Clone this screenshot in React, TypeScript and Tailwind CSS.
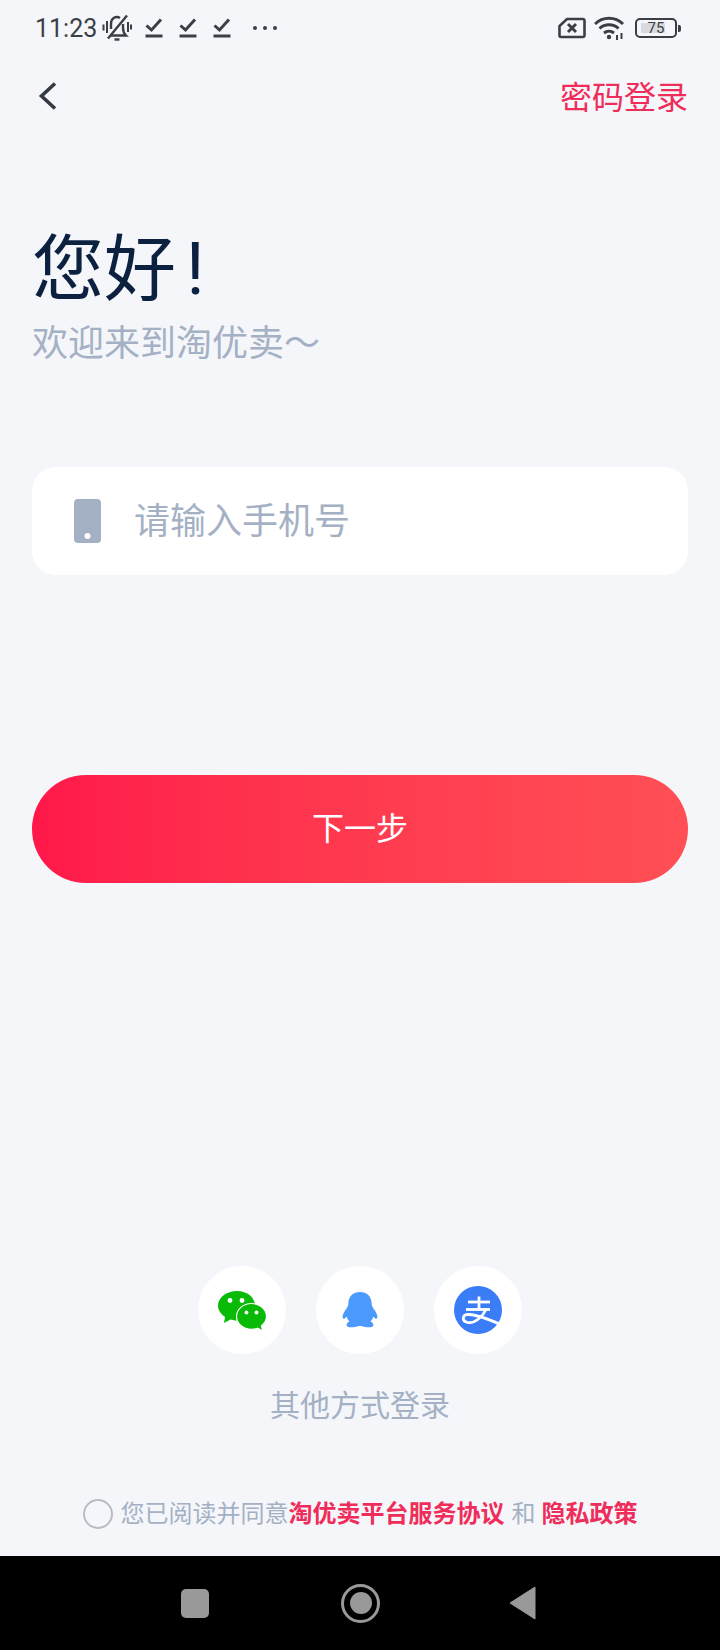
const cjk = "font-['Roboto','Noto_Sans_CJK_SC',sans-serif]";

function CheckMark() {
  return (
    <svg width="18" height="22" viewBox="0 0 18 22" fill="none" stroke="#3b3f45">
      <path d="M1.500 8.500 L6.500 13 L16 2.500" strokeWidth="3" />
      <path d="M0.500 19 H17.500" strokeWidth="3" />
    </svg>
  );
}

function StatusBar() {
  return (
    <div className="h-[56px] flex items-center pl-[35px] pr-[39px] text-[#3b3f45]">
      <span className="text-[25px] leading-none font-['Roboto',sans-serif]">11:23</span>
      {/* muted bell */}
      <svg width="30" height="28" viewBox="0 0 30 28" fill="none" stroke="#3b3f45" strokeWidth="2.400" className="ml-[5px]">
        <path d="M9 21.500 H24 C22 19.500 21 17.500 21 14 V10" />
        <path d="M18 4 C14 1.500 9 4 9 10 V15" />
        <path d="M6 24.500 L25 1.500" />
        <path d="M12.500 25.500 H17.500" />
        <path d="M1.500 10.500 V16.500 M5 7 V19 M26 8 V18 M29 10.500 V15.500" strokeWidth="2" />
      </svg>
      <div className="flex items-center gap-[16px] ml-[13px]">
        <CheckMark />
        <CheckMark />
        <CheckMark />
      </div>
      <div className="flex gap-[6px] ml-[22px]">
        <span className="w-[4px] h-[4px] rounded-full bg-[#3b3f45]" />
        <span className="w-[4px] h-[4px] rounded-full bg-[#3b3f45]" />
        <span className="w-[4px] h-[4px] rounded-full bg-[#3b3f45]" />
      </div>
      <div className="ml-auto flex items-center">
        {/* sim card */}
        <svg width="28" height="22" viewBox="0 0 28 22" fill="none" stroke="#3b3f45">
          <path d="M9 2 H25 A1.500 1.500 0 0 1 26.500 3.500 V18.500 A1.500 1.500 0 0 1 25 20 H3 A1.500 1.500 0 0 1 1.500 18.500 V9 Z" strokeWidth="2.600" />
          <path d="M10 7 L18 15 M18 7 L10 15" strokeWidth="3" />
        </svg>
        {/* wifi */}
        <svg width="31" height="24" viewBox="0 0 31 24" fill="none" stroke="#3b3f45" strokeWidth="3" className="ml-[8px]">
          <path d="M1 8 A20 20 0 0 1 29 8" />
          <path d="M5.500 12.500 A14 14 0 0 1 24.500 12.500" />
          <path d="M10 17 A8 8 0 0 1 20 17" />
          <circle cx="15" cy="21" r="2.200" fill="#3b3f45" stroke="none" />
          <path d="M23 19 V24 M27.500 17 V23" strokeWidth="2" />
        </svg>
        {/* battery */}
        <div className="ml-[10px] flex items-center">
          <div className="relative w-[42px] h-[20px] rounded-[5px] border-2 border-[#3b3f45] flex items-center justify-center">
            <span className="absolute left-[4px] top-[3px] bottom-[3px] w-[24px] bg-[#d8dade] rounded-[1px]" />
            <span className="relative text-[15px] leading-none font-['Roboto',sans-serif]">75</span>
          </div>
          <span className="ml-[1px] w-[3px] h-[7px] rounded-r-[2px] bg-[#3b3f45]" />
        </div>
      </div>
    </div>
  );
}

function WeChatIcon() {
  return (
    <svg width="49" height="42" viewBox="0 0 49 42" className="mt-[4px]">
      <path d="M19 0 C29.500 0 37 6.800 37 14.500 C37 23 29 29.500 19 29.500 C16.500 29.500 14.800 29 12.500 28.500 L6 32 L7 26 C3 23 0 19.500 0 14.500 C0 6.800 8.500 0 19 0 Z" fill="#09bb07" />
      <path d="M33.500 12.500 C42 12.500 48.500 18.500 48.500 25.500 C48.500 29.500 46.300 32.500 43.500 35 L45 40 L39.500 37.200 C37.500 38 35.500 38.300 33.500 38.300 C25 38.300 18.500 32.500 18.500 25.500 C18.500 18.500 25 12.500 33.500 12.500 Z" fill="#09bb07" stroke="#ffffff" strokeWidth="1.200" />
      <circle cx="12" cy="9.500" r="2.400" fill="#fff" />
      <circle cx="24" cy="9.500" r="2.400" fill="#fff" />
      <circle cx="28.500" cy="21.500" r="1.900" fill="#fff" />
      <circle cx="38.500" cy="21.500" r="1.900" fill="#fff" />
    </svg>
  );
}

function QQIcon() {
  return (
    <svg width="36" height="36" viewBox="0 0 34 38" preserveAspectRatio="none">
      <path
        d="M17 0 C24.500 0 28 6 28 12 C28 14 28.500 15.500 30 18 C32 21 33.500 24 33.500 26.500 C33.500 28 32.500 28.500 31.500 28 L29.500 26 C29 28 28 30 27 31 C29 32.500 30 33.500 29.500 35.500 C29 37.500 25.500 37.500 22 37 C20 36.600 18.500 36 17 36 C15.500 36 14 36.600 12 37 C8.500 37.500 5 37.500 4.500 35.500 C4 33.500 5 32.500 7 31 C6 30 5 28 4.500 26 L2.500 28 C1.500 28.500 0.500 28 0.500 26.500 C0.500 24 2 21 4 18 C5.500 15.500 6 14 6 12 C6 6 9.500 0 17 0 Z"
        fill="#4d9aff"
      />
    </svg>
  );
}

function AlipayIcon() {
  return (
    <svg width="48" height="48" viewBox="0 0 48 48">
      <circle cx="24" cy="24" r="24" fill="#3b7cf7" />
      <g fill="none" stroke="#fff" strokeWidth="2.800">
        <path d="M14 16 H36" />
        <path d="M25 10.500 V23" />
        <path d="M12 23.500 H36" />
        <path d="M32 23.500 C29 30 21 38 13.500 36.500 C7 35 8.500 28 15 28.500 C24 29 34 33 48 39" />
      </g>
    </svg>
  );
}

export default function App() {
  return (
    <div className={`w-[720px] h-[1650px] bg-[#f5f6fa] flex flex-col ${cjk}`}>
      <StatusBar />

      <div className="flex items-center justify-between h-[80px] pl-[38px] pr-[32px]">
        <svg width="20" height="30" viewBox="0 0 20 30" fill="none" stroke="#333a42" strokeWidth="3.600">
          <path d="M17 2.500 L3.500 15 L17 27.500" />
        </svg>
        <span className="pt-[4px] text-[32px] text-[#ef2d5a]">密码登录</span>
      </div>

      <div className="px-[32px] flex-1 flex flex-col">
        <h1 className="mt-[94px] text-[72px] leading-[80px] font-normal text-[#0c2040]">
          您好<span className="ml-[10px]">!</span>
        </h1>
        <p className="mt-[9px] text-[36px] leading-[50px] text-[#a4b1c4]">欢迎来到淘优卖～</p>

        <div className="mt-[98px] h-[108px] bg-white rounded-[24px] flex items-center pl-[42px]">
          <svg width="27" height="44" viewBox="0 0 27 44">
            <path d="M4 0 H23 A4 4 0 0 1 27 4 V40 A4 4 0 0 1 23 44 H4 A4 4 0 0 1 0 40 V4 A4 4 0 0 1 4 0 Z" fill="#a4b1c4" />
            <circle cx="13.500" cy="37" r="3" fill="#fff" />
          </svg>
          <span className="ml-[33px] pt-[2px] text-[36px] text-[#a4b1c4]">请输入手机号</span>
        </div>

        <button className="mt-[200px] h-[108px] rounded-full bg-gradient-to-r from-[#ff174a] to-[#ff4f55] text-white text-[32px]">
          下一步
        </button>

        <div className="mt-[383px] flex justify-center gap-[30px]">
          <div className="w-[88px] h-[88px] rounded-full bg-white flex items-center justify-center">
            <WeChatIcon />
          </div>
          <div className="w-[88px] h-[88px] rounded-full bg-white flex items-center justify-center">
            <QQIcon />
          </div>
          <div className="w-[88px] h-[88px] rounded-full bg-white flex items-center justify-center">
            <AlipayIcon />
          </div>
        </div>
        <p className="mt-[30px] text-center text-[30px] leading-[44px] text-[#a4b1c4]">其他方式登录</p>

        <div className="mt-[69px] flex items-center justify-center text-[24px] leading-[34px] text-[#a4b1c4]">
          <span className="w-[30px] h-[30px] rounded-full border-2 border-[#b9bcc2] mr-[8px]" />
          <span>您已阅读并同意</span>
          <span className="font-bold text-[#ef2d5a]">淘优卖平台服务协议</span>
          <span className="ml-[7px] mr-[6px]">和</span>
          <span className="font-bold text-[#ef2d5a]">隐私政策</span>
        </div>
      </div>

      <div className="h-[94px] bg-black flex items-center justify-center pr-[2px]">
        <span className="w-[28px] h-[29px] rounded-[5px] bg-[#999999] mr-[132px]" />
        <span className="w-[39px] h-[39px] rounded-full border-[3px] border-[#999999] flex items-center justify-center mr-[129px]">
          <span className="w-[22px] h-[22px] rounded-full bg-[#999999]" />
        </span>
        <svg width="28" height="34" viewBox="0 0 28 34">
          <path d="M26 1 V33 L1 17 Z" fill="#999999" stroke="#999999" strokeWidth="1" strokeLinejoin="round" />
        </svg>
      </div>
    </div>
  );
}
